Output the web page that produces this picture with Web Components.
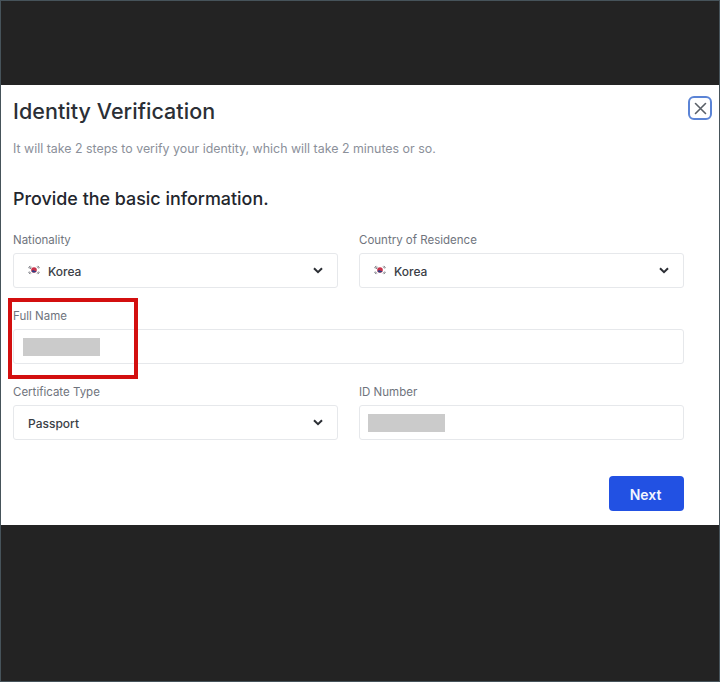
<!DOCTYPE html>
<html>
<head>
<meta charset="utf-8">
<title>Identity Verification</title>
<style>
  html, body { margin: 0; height: 682px; overflow: hidden; background: #232323; font-family: Inter, "Liberation Sans", sans-serif; }
</style>
</head>
<body>
<verify-page>
  <verify-modal heading="Identity Verification" hint="It will take 2 steps to verify your identity, which will take 2 minutes or so.">
    <h-section>Provide the basic information.</h-section>
    <form-grid>
      <form-field label="Nationality"><select-box flag>Korea</select-box></form-field>
      <form-field label="Country of Residence"><select-box flag>Korea</select-box></form-field>
      <form-field label="Full Name" wide><text-box></text-box></form-field>
      <form-field label="Certificate Type"><select-box>Passport</select-box></form-field>
      <form-field label="ID Number"><text-box style="--inset: 8px"></text-box></form-field>
    </form-grid>
    <next-button>Next</next-button>
  </verify-modal>
</verify-page>

<script>
class VerifyPage extends HTMLElement {
  constructor() {
    super();
    this.attachShadow({mode: 'open'});
    this.shadowRoot.innerHTML = `
      <style>
        :host {
          display: block;
          box-sizing: border-box;
          width: 720px;
          height: 682px;
          padding: 85px 1px 0;
          background: #232323;
          box-shadow: inset 0 0 0 1px #46535a;
        }
      </style>
      <slot></slot>`;
  }
}

class VerifyModal extends HTMLElement {
  constructor() {
    super();
    this.attachShadow({mode: 'open'});
    this.shadowRoot.innerHTML = `
      <style>
        :host {
          display: block;
          position: relative;
          box-sizing: border-box;
          height: 440px;
          padding: 13px 35px 0 12px;
          background: #fff;
        }
        h2 {
          margin: 0;
          font-size: 21.5px;
          line-height: 26px;
          font-weight: 500;
          letter-spacing: .05px;
          color: #2b2f36;
        }
        p {
          margin: 17px 0 0;
          font-size: 12.4px;
          line-height: 16px;
          color: #8b909a;
        }
        button {
          position: absolute;
          top: 11px;
          right: 7px;
          box-sizing: border-box;
          width: 24px;
          height: 24px;
          padding: 0;
          display: flex;
          align-items: center;
          justify-content: center;
          background: #fff;
          border: 2px solid #5b84d6;
          border-radius: 6px;
        }
        .mark {
          position: absolute;
          left: 7px;
          top: 213px;
          box-sizing: border-box;
          width: 130px;
          height: 81px;
          border: 4px solid #d30f0f;
          pointer-events: none;
        }
      </style>
      <h2></h2>
      <p></p>
      <button aria-label="Close">
        <svg width="13" height="13" viewBox="0 0 13 13" fill="none" stroke="#5a6068" stroke-width="1.6" stroke-linecap="round"><path d="M1.5 1.5l10 10M11.5 1.5l-10 10"/></svg>
      </button>
      <slot></slot>
      <div class="mark"></div>`;
    this.shadowRoot.querySelector('h2').textContent = this.getAttribute('heading');
    this.shadowRoot.querySelector('p').textContent = this.getAttribute('hint');
  }
}

class HSection extends HTMLElement {
  constructor() {
    super();
    this.attachShadow({mode: 'open'});
    this.shadowRoot.innerHTML = `
      <style>
        :host {
          display: block;
          margin-top: 30px;
          font-size: 17.9px;
          line-height: 24px;
          font-weight: 500;
          color: #23262d;
        }
      </style>
      <slot></slot>`;
  }
}

class FormGrid extends HTMLElement {
  constructor() {
    super();
    this.attachShadow({mode: 'open'});
    this.shadowRoot.innerHTML = `
      <style>
        :host {
          display: grid;
          grid-template-columns: 325px 325px;
          column-gap: 21px;
          row-gap: 20px;
          margin-top: 21px;
        }
      </style>
      <slot></slot>`;
  }
}

class FormField extends HTMLElement {
  constructor() {
    super();
    this.attachShadow({mode: 'open'});
    this.shadowRoot.innerHTML = `
      <style>
        :host { display: block; }
        :host([wide]) { grid-column: 1 / -1; }
        label {
          display: block;
          margin-bottom: 5px;
          font-size: 11.5px;
          line-height: 16px;
          color: #6f747d;
        }
      </style>
      <label></label>
      <slot></slot>`;
    this.shadowRoot.querySelector('label').textContent = this.getAttribute('label');
  }
}

class SelectBox extends HTMLElement {
  constructor() {
    super();
    this.attachShadow({mode: 'open'});
    const flag = this.hasAttribute('flag') ? `
      <svg class="flag" width="12" height="10" viewBox="0 0 12 10">
        <circle cx="6" cy="5" r="2.8" fill="#c8324a"/>
        <path d="M3.4 5.9a2.8 2.8 0 0 0 5.2-.2c-.6.5-1.6.6-2.2 0-.8-.7-2-.6-3 .2z" fill="#2b3f86"/>
        <path d="M.5 2.9l1.6-2M1.3 3.5l1.6-2M2.1 4l1.2-1.5M9.9.9l1.6 2M9.1 1.5l1.6 2M.5 7.1l1.6 2M1.3 6.5l1.6 2M9.9 9.1l1.6-2M9.1 8.5l1.6-2" stroke="#4a4c55" stroke-width=".7" fill="none"/>
      </svg>` : '';
    this.shadowRoot.innerHTML = `
      <style>
        :host {
          display: flex;
          align-items: center;
          box-sizing: border-box;
          height: 35px;
          padding: 0 14px;
          border: 1px solid #e6e8eb;
          border-radius: 3px;
          font-size: 12px;
          font-weight: 500;
          color: #3a3e46;
        }
        .flag { margin: -1px 8px 0 0; }
        .text { flex: 1; padding-top: 1px; }
        .chev { margin-top: -1px; }
      </style>
      ${flag}
      <span class="text"><slot></slot></span>
      <svg class="chev" width="10" height="7" viewBox="0 0 10 7" fill="none" stroke="#2b2e34" stroke-width="2"><path d="M1 1.2l4 4 4-4"/></svg>`;
  }
}

class TextBox extends HTMLElement {
  constructor() {
    super();
    this.attachShadow({mode: 'open'});
    this.shadowRoot.innerHTML = `
      <style>
        :host {
          display: flex;
          align-items: center;
          box-sizing: border-box;
          height: 35px;
          padding: 0 var(--inset, 9px);
          border: 1px solid #e6e8eb;
          border-radius: 3px;
        }
        .blur { width: 77px; height: 18px; background: #cbcbcb; }
      </style>
      <div class="blur"></div>`;
  }
}

class NextButton extends HTMLElement {
  constructor() {
    super();
    this.attachShadow({mode: 'open'});
    this.shadowRoot.innerHTML = `
      <style>
        :host {
          display: flex;
          align-items: center;
          justify-content: center;
          box-sizing: border-box;
          width: 75px;
          height: 35px;
          margin: 36px 0 0 596px;
          padding: 1px 2px 0 0;
          background: #2251e3;
          border-radius: 4px;
          font-size: 14px;
          font-weight: 600;
          color: #f2f5ff;
        }
      </style>
      <slot></slot>`;
  }
}

customElements.define('verify-page', VerifyPage);
customElements.define('verify-modal', VerifyModal);
customElements.define('h-section', HSection);
customElements.define('form-grid', FormGrid);
customElements.define('form-field', FormField);
customElements.define('select-box', SelectBox);
customElements.define('text-box', TextBox);
customElements.define('next-button', NextButton);
</script>
</body>
</html>
